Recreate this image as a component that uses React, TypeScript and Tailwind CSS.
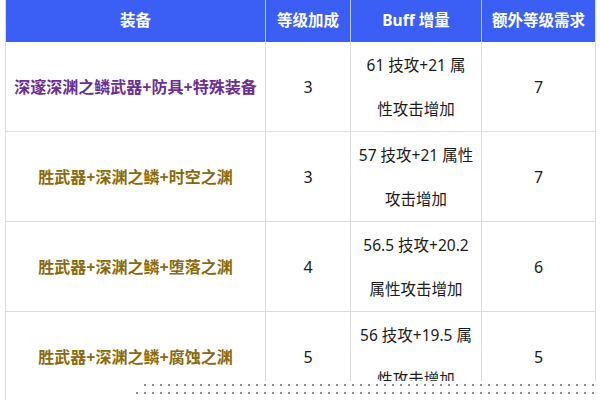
import React from 'react';

interface Row {
  gear: string;
  gearColor: string;
  level: string;
  buff: [string, string];
  extra: string;
}

const rows: Row[] = [
  { gear: '深邃深渊之鳞武器+防具+特殊装备', gearColor: 'text-[#6b2e92]', level: '3', buff: ['61 技攻+21 属', '性攻击增加'], extra: '7' },
  { gear: '胜武器+深渊之鳞+时空之渊', gearColor: 'text-[#8a6a0e]', level: '3', buff: ['57 技攻+21 属性', '攻击增加'], extra: '7' },
  { gear: '胜武器+深渊之鳞+堕落之渊', gearColor: 'text-[#8a6a0e]', level: '4', buff: ['56.5 技攻+20.2', '属性攻击增加'], extra: '6' },
  { gear: '胜武器+深渊之鳞+腐蚀之渊', gearColor: 'text-[#8a6a0e]', level: '5', buff: ['56 技攻+19.5 属', '性攻击增加'], extra: '5' },
];

const headers = ['装备', '等级加成', 'Buff 增量', '额外等级需求'];

const App: React.FC = () => {
  return (
    <div
      className="relative w-[600px] h-[400px] overflow-hidden bg-white"
      style={{ fontFamily: '"Noto Sans", "Noto Sans CJK SC", sans-serif' }}
    >
      <div className="ml-[5px] w-[590px] grid grid-cols-[260px_85px_131px_114px] border-l border-[#dcdcdc]">
        {headers.map((h, i) => (
          <div
            key={h}
            className={`h-[42px] flex items-center justify-center bg-[#3b5ef4] text-white font-bold text-[15.5px] ${
              i < 3 ? 'border-r border-[#b9c6fb]' : 'border-r border-[#dcdcdc]'
            }`}
          >
            {h}
          </div>
        ))}
        {rows.map((r, idx) => (
          <React.Fragment key={idx}>
            <div className="h-[90px] flex items-center justify-center border-r border-b border-[#dcdcdc]">
              <span className={`font-bold text-[16px] ${r.gearColor}`}>{r.gear}</span>
            </div>
            <div className="h-[90px] flex items-center justify-center border-r border-b border-[#dcdcdc] text-[16px] text-[#1a1a1a]">
              {r.level}
            </div>
            <div className="h-[90px] flex flex-col items-center justify-center border-r border-b border-[#dcdcdc] text-[15.5px] text-[#1a1a1a] leading-[44px]">
              <span>{r.buff[0]}</span>
              <span>{r.buff[1]}</span>
            </div>
            <div className="h-[90px] flex items-center justify-center border-r border-b border-[#dcdcdc] text-[16px] text-[#1a1a1a]">
              {r.extra}
            </div>
          </React.Fragment>
        ))}
      </div>

      {/* dotted strip over the bottom edge */}
      <div className="absolute left-[135px] right-0 top-[381px] bottom-0 bg-white">
        <div className="absolute left-[6px] right-0 top-[2px] h-[4px] bg-[radial-gradient(circle,#8f8f8f_1px,transparent_1.5px)] bg-[length:8px_4px]" />
        <div className="absolute left-[-2px] right-0 top-[10px] h-[4px] bg-[radial-gradient(circle,#8f8f8f_1px,transparent_1.5px)] bg-[length:8px_4px]" />
      </div>
    </div>
  );
};

export default App;
